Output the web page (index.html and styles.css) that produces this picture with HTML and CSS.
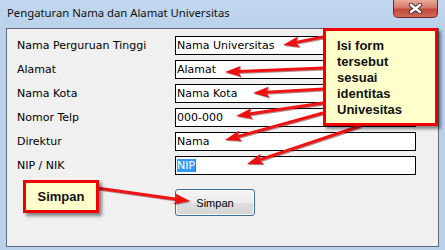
FILE: index.html
```html
<!DOCTYPE html>
<html lang="id">
<head>
  <meta charset="UTF-8" />
  <title>Pengaturan Nama dan Alamat Universitas</title>
  <link rel="stylesheet" href="styles.css">
</head>
<body>
  <div class="window">
    <div class="titlebar">
      <span class="title">Pengaturan Nama dan Alamat Universitas</span>
      <div class="close">
        <svg width="15" height="11" viewBox="0 0 15 11">
          <path d="M3 2 L12 9 M12 2 L3 9" stroke="#3a2a28" stroke-width="4.4" stroke-linecap="round"/>
          <path d="M3 2 L12 9 M12 2 L3 9" stroke="#fff" stroke-width="2.6" stroke-linecap="round"/>
        </svg>
      </div>
    </div>

    <div class="client">
      <div class="form">
        <label>Nama Perguruan Tinggi</label>
        <div class="field">Nama Universitas</div>
        <label>Alamat</label>
        <div class="field">Alamat</div>
        <label>Nama Kota</label>
        <div class="field">Nama Kota</div>
        <label>Nomor Telp</label>
        <div class="field">000-000</div>
        <label>Direktur</label>
        <div class="field">Nama</div>
        <label>NIP / NIK</label>
        <div class="field"><span class="sel">NIP</span><span class="caret"></span></div>
        <button class="btn">Simpan</button>
      </div>
    </div>

    <!-- annotations drawn over the dialog -->
    <svg class="arrows" width="445" height="250" viewBox="0 0 445 250">
      <defs>
        <marker id="head" markerUnits="userSpaceOnUse" markerWidth="16" markerHeight="11" viewBox="0 0 16 11" refX="3" refY="5.5" orient="auto">
          <path d="M0,0 L16,5.5 L0,11 L3,5.5 Z" fill="#ee1010"/>
        </marker>
      </defs>
      <g stroke="#f01414" stroke-width="3" marker-end="url(#head)">
        <line x1="323" y1="37" x2="295.8" y2="42.4"/>
        <line x1="323" y1="68" x2="238" y2="71.5"/>
        <line x1="323" y1="89" x2="266" y2="92.3"/>
        <line x1="323" y1="103" x2="248.9" y2="114.1"/>
        <line x1="323" y1="113" x2="237.5" y2="136.6"/>
        <line x1="360" y1="126" x2="259.3" y2="159.9"/>
        <line x1="97" y1="188" x2="177.1" y2="199.2"/>
      </g>
    </svg>

    <div class="note note-main">Isi form<br>tersebut<br>sesuai<br>identitas<br>Univesitas</div>
    <div class="note note-save">Simpan</div>
  </div>
</body>
</html>
```

FILE: styles.css
```css
body {
  margin: 0;
  background: #b9d1ea;
}

.window {
  position: relative;
  width: 445px;
  height: 250px;
  background: linear-gradient(#c3d8ef, #b9d1ea 30px);
  overflow: hidden;
}

.titlebar {
  height: 28px;
  display: flex;
  justify-content: space-between;
  align-items: flex-start;
}

.title {
  padding-left: 7px;
  line-height: 26px;
  font-family: "Noto Sans", sans-serif;
  font-size: 11.3px;
  color: #111;
}

.close {
  width: 45px;
  height: 18px;
  margin-right: 7px;
  box-sizing: border-box;
  border: 1px solid #6b2a22;
  border-top: none;
  border-radius: 0 0 5px 5px;
  background: linear-gradient(#e9a99b, #d77a6b 45%, #c4473a 55%, #d06a5a);
  display: flex;
  justify-content: center;
  align-items: center;
}

.client {
  height: 219px;
  margin: 0 6px;
  box-sizing: border-box;
  border: 1px solid #5d6b7c;
  background: #f0f0f0;
}

.form {
  display: grid;
  grid-template-columns: 158px 241px;
  grid-template-rows: repeat(6, 19px) auto;
  row-gap: 5px;
  padding: 7px 0 0 10px;
  font-family: "DejaVu Sans", sans-serif;
  font-size: 11px;
  color: #000;
}

.form label {
  align-self: center;
}

.field {
  box-sizing: border-box;
  border: 1px solid #000;
  background: #fff;
  padding: 0 1px;
  line-height: 17px;
  display: flex;
  align-items: center;
}

.sel {
  background: #3399ff;
  color: #fff;
  line-height: 13px;
}

.caret {
  width: 1px;
  height: 13px;
  background: #b05a10;
}

.btn {
  grid-column: 2;
  width: 80px;
  height: 27px;
  margin-top: 9px;
  border: 1px solid #3c6f9a;
  border-radius: 3px;
  box-shadow: inset 0 0 0 1px #fbfbfb;
  background: linear-gradient(#f4f4f4, #ececec 50%, #dedede 51%, #d4d4d4);
  font-family: "Liberation Sans", sans-serif;
  font-size: 11px;
  color: #000;
  padding: 0;
}

.arrows {
  position: absolute;
  left: 0;
  top: 0;
  filter: drop-shadow(1px 1px 0.6px rgba(90, 0, 0, 0.45));
}

.note {
  position: absolute;
  box-sizing: border-box;
  border: 3px solid #f00000;
  background: #ffffcc;
  box-shadow: 3px 3px 3px rgba(0, 0, 0, 0.45);
  font-family: "Liberation Sans", sans-serif;
  font-size: 13px;
  font-weight: bold;
  color: #111;
}

.note-main {
  left: 323px;
  top: 28px;
  width: 115px;
  height: 98px;
  padding: 7px 0 0 11px;
  line-height: 16px;
}

.note-save {
  left: 23px;
  top: 180px;
  width: 76px;
  height: 33px;
  display: flex;
  justify-content: center;
  align-items: center;
}
```
